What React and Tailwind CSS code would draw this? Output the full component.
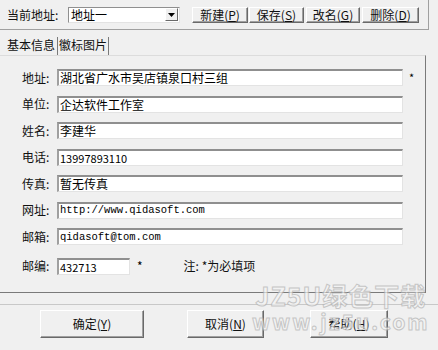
import React from 'react';

const font = { fontFamily: '"Noto Sans CJK SC", "Liberation Sans", sans-serif' };

const TopButton = ({ label, hot, className = '' }) => (
  <button
    className={`h-[16px] flex items-center justify-center text-[12px] leading-none text-[#111] bg-[#f0f0f0] border-t border-l border-white border-r border-b border-r-[#696969] border-b-[#696969] shadow-[inset_-1px_-1px_0_#a0a0a0] ${className}`}
  >
    {label}(<span className="underline">{hot}</span>)
  </button>
);

const BigButton = ({ label, hot, className = '' }) => (
  <button
    className={`h-[28px] flex items-center justify-center text-[12px] leading-none text-[#111] bg-[#f0f0f0] border-t border-l border-white border-r border-b border-r-[#696969] border-b-[#696969] shadow-[inset_-1px_-1px_0_#a0a0a0] ${className}`}
  >
    {label}(<span className="underline">{hot}</span>)
  </button>
);

const Field = ({ value, mono, width = 'w-[346px]' }) => (
  <div
    className={`${width} h-[17px] bg-white border-t-2 border-l-2 border-t-[#8f8f8f] border-l-[#a0a0a0] border-b border-r border-b-[#e3e3e3] border-r-[#e3e3e3] flex items-center pl-[1px] overflow-hidden`}
  >
    <span
      className={mono ? 'text-[10.5px] leading-none text-black' : 'text-[12px] leading-none text-black'}
      style={mono ? { fontFamily: '"Liberation Mono", monospace' } : undefined}
    >
      {value}
    </span>
  </div>
);

const Row = ({ label, children }) => (
  <div className="flex items-center h-[17px]">
    <span className="w-[57px] pl-[22px] text-[12px] leading-none text-[#111] whitespace-nowrap">{label}</span>
    {children}
  </div>
);

const rows = [
  { label: '地址:', value: '湖北省广水市吴店镇泉口村三组', star: true },
  { label: '单位:', value: '企达软件工作室' },
  { label: '姓名:', value: '李建华' },
  { label: '电话:', value: '13997893110', small: true },
  { label: '传真:', value: '暂无传真' },
  { label: '网址:', value: 'http://www.qidasoft.com', mono: true },
  { label: '邮箱:', value: 'qidasoft@tom.com', mono: true },
];

export default function App() {
  return (
    <div className="w-[438px] h-[350px] bg-[#f0f0f0] relative overflow-hidden" style={font}>
      {/* top address bar */}
      <div className="w-[429px] h-[30px] border-r border-b border-[#a0a0a0] flex items-center pl-[7px]">
        <span className="text-[12px] leading-none text-[#111] w-[61px]">当前地址:</span>
        <div className="w-[112px] h-[16px] bg-white border-t border-l border-[#8f8f8f] border-b border-r border-b-[#e3e3e3] border-r-[#e3e3e3] flex items-center">
          <span className="flex-1 pl-[2px] text-[12px] leading-none text-black">地址一</span>
          <div className="w-[13px] h-[13px] mr-[1px] bg-[#f0f0f0] border-t border-l border-white border-r border-b border-r-[#696969] border-b-[#696969] flex items-center justify-center">
            <svg width="7" height="4" viewBox="0 0 7 4">
              <path d="M0 0h7L3.5 4z" fill="#000" />
            </svg>
          </div>
        </div>
        <TopButton label="新建" hot="P" className="ml-[12px] w-[56px]" />
        <TopButton label="保存" hot="S" className="ml-[1px] w-[55px]" />
        <TopButton label="改名" hot="G" className="ml-[2px] w-[54px]" />
        <TopButton label="删除" hot="D" className="ml-[2px] w-[57px]" />
      </div>

      {/* tabs */}
      <div className="flex items-end h-[25px] pl-[5px]">
        <div className="h-[18px] w-[53px] flex items-start justify-center border-r border-[#7a7a7a] text-[12px] leading-none text-[#111] pt-[2px]">
          基本信息
        </div>
        <div className="h-[18px] w-[51px] flex items-start justify-center border-r border-[#7a7a7a] text-[12px] leading-none text-[#111] pt-[2px]">
          徽标图片
        </div>
      </div>

      {/* tab page */}
      <div className="w-[426px] h-[238px] border-t border-t-[#dcdcdc] border-r border-b border-r-[#7a7a7a] border-b-[#7a7a7a] pt-[13px] flex flex-col gap-[9.5px]">
        {rows.map((r) => (
          <Row key={r.label} label={r.label}>
            <Field value={r.small ? <span className="text-[11px]">{r.value}</span> : r.value} mono={r.mono} />
            {r.star && <span className="ml-[6px] text-[11px] leading-none text-black">*</span>}
          </Row>
        ))}
        <div className="mt-[3px]">
          <Row label="邮编:">
            <Field value={<span className="text-[11px]">432713</span>} width="w-[73px]" />
            <span className="ml-[7px] text-[12px] leading-none text-black">*</span>
            <span className="ml-[41px] text-[12px] leading-none text-[#111]">注: *为必填项</span>
          </Row>
        </div>
      </div>

      {/* separator */}
      <div className="mt-[11px] h-px w-[438px] bg-[#c8c8c8]" />

      {/* bottom buttons */}
      <div className="flex mt-[5px]">
        <BigButton label="确定" hot="Y" className="ml-[40px] w-[104px]" />
        <BigButton label="取消" hot="N" className="ml-[43px] w-[77px]" />
        <BigButton label="帮助" hot="H" className="ml-[46px] w-[78px]" />
      </div>

      {/* watermark */}
      <div className="absolute left-[252px] top-[283px] pointer-events-none flex flex-col items-center opacity-70 whitespace-nowrap">
        <span className="text-[25px] font-bold leading-none tracking-[1px] text-[#f4f4f4] [-webkit-text-stroke:1px_#b4b4b4]">
          JZ5U绿色下载
        </span>
        <span className="mt-[3px] text-[21px] font-bold leading-none tracking-[2px] text-[#f4f4f4] [-webkit-text-stroke:1px_#b4b4b4]">
          www.jz5u.com
        </span>
      </div>
    </div>
  );
}
